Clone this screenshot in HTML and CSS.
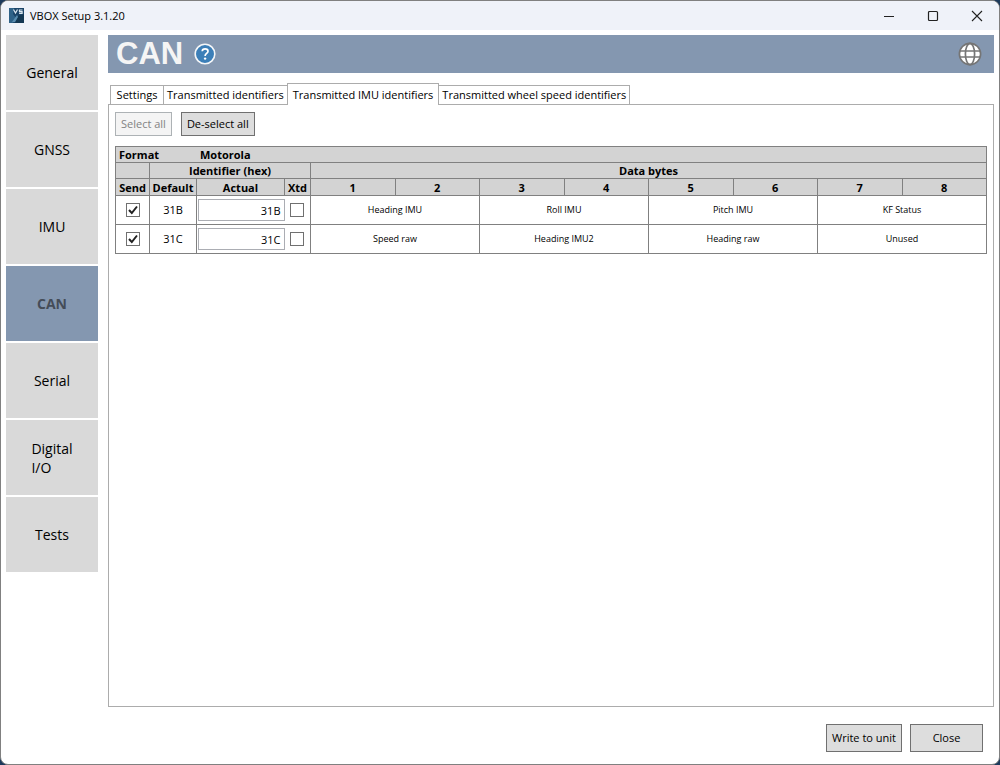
FILE: index.html
```html
<!DOCTYPE html>
<html lang="en">
<head>
  <meta charset="UTF-8">
  <title>VBOX Setup 3.1.20</title>
  <link rel="stylesheet" href="styles.css">
</head>
<body>
  <div class="window">

    <header class="titlebar">
      <svg class="app-icon" width="15" height="15" viewBox="0 0 15 15">
        <rect width="15" height="15" fill="#1b4468"/>
        <path d="M0 0h5L4 6l3 4-3 5H0z" fill="#2f6288"/>
        <path d="M9 8l6-2v9H6z" fill="#143853"/>
        <path d="M3 14l5-7 1 2-3 5z" fill="#5a8db0"/>
        <path d="M4.500 1.500l2 3.500 2-3.500M13.500 2h-3v1.600h2.600v1.800h-3" fill="none" stroke="#dbe7f0" stroke-width="1.200"/>
      </svg>
      <span class="window-title">VBOX Setup 3.1.20</span>
      <div class="window-controls">
        <button type="button" aria-label="Minimize">
          <svg width="12" height="12" viewBox="0 0 12 12"><path d="M1 6.500h10" stroke="#222" fill="none"/></svg>
        </button>
        <button type="button" aria-label="Maximize">
          <svg width="12" height="12" viewBox="0 0 12 12"><rect x="1.500" y="1.500" width="9" height="9" rx="1" stroke="#222" stroke-width="1.200" fill="none"/></svg>
        </button>
        <button type="button" aria-label="Close window">
          <svg width="12" height="12" viewBox="0 0 12 12"><path d="M1 1l10 10M11 1L1 11" stroke="#222" stroke-width="1.100" fill="none"/></svg>
        </button>
      </div>
    </header>

    <div class="content">
      <nav class="sidebar">
        <button type="button">General</button>
        <button type="button">GNSS</button>
        <button type="button">IMU</button>
        <button type="button" class="active">CAN</button>
        <button type="button">Serial</button>
        <button type="button"><span class="two-line">Digital<br>I/O</span></button>
        <button type="button">Tests</button>
      </nav>

      <main class="page">
        <div class="banner">
          <h1>CAN</h1>
          <button type="button" class="icon-button" aria-label="Help">
            <svg width="22" height="22" viewBox="0 0 22 22">
              <circle cx="11" cy="11" r="9.800" fill="#3c7fb8" stroke="#f4f6f8" stroke-width="1.600"/>
              <path d="M8.200 8.300C8.300 6.600 9.500 5.800 11.100 5.800c1.700 0 2.900.9 2.900 2.400 0 2.200-2.900 2.300-2.900 4.700" fill="none" stroke="#fff" stroke-width="1.700"/>
              <circle cx="11.100" cy="15.600" r="1.200" fill="#fff"/>
            </svg>
          </button>
          <button type="button" class="icon-button language" aria-label="Language">
            <svg width="24" height="24" viewBox="0 0 24 24">
              <circle cx="12" cy="12" r="10.500" fill="#fff"/>
              <g fill="none" stroke="#757575" stroke-width="1.700">
                <circle cx="12" cy="12" r="10.600"/>
                <ellipse cx="12" cy="12" rx="4.600" ry="10.600"/>
                <path d="M2 9h20M2 15h20"/>
              </g>
            </svg>
          </button>
        </div>

        <div class="tabs" role="tablist">
          <button type="button" role="tab">Settings</button>
          <button type="button" role="tab">Transmitted identifiers</button>
          <button type="button" role="tab" class="active" aria-selected="true">Transmitted IMU identifiers</button>
          <button type="button" role="tab">Transmitted wheel speed identifiers</button>
        </div>

        <section class="panel">
          <div class="toolbar">
            <button type="button" class="button" disabled>Select all</button>
            <button type="button" class="button">De-select all</button>
          </div>

          <table class="identifiers">
            <colgroup>
              <col class="col-send">
              <col class="col-default">
              <col class="col-actual">
              <col class="col-xtd">
              <col span="8">
            </colgroup>
            <thead>
              <tr>
                <th colspan="12" class="format"><span>Format</span>Motorola</th>
              </tr>
              <tr>
                <th></th>
                <th colspan="3">Identifier (hex)</th>
                <th colspan="8">Data bytes</th>
              </tr>
              <tr class="columns">
                <th>Send</th>
                <th>Default</th>
                <th>Actual</th>
                <th>Xtd</th>
                <th>1</th>
                <th>2</th>
                <th>3</th>
                <th>4</th>
                <th>5</th>
                <th>6</th>
                <th>7</th>
                <th>8</th>
              </tr>
            </thead>
            <tbody>
              <tr>
                <td><input type="checkbox" aria-label="Send 31B" checked></td>
                <td>31B</td>
                <td class="actual"><input type="text" aria-label="Actual identifier for 31B" value="31B"></td>
                <td class="xtd"><input type="checkbox" aria-label="Extended 31B"></td>
                <td colspan="2" class="signal">Heading IMU</td>
                <td colspan="2" class="signal">Roll IMU</td>
                <td colspan="2" class="signal">Pitch IMU</td>
                <td colspan="2" class="signal">KF Status</td>
              </tr>
              <tr>
                <td><input type="checkbox" aria-label="Send 31C" checked></td>
                <td>31C</td>
                <td class="actual"><input type="text" aria-label="Actual identifier for 31C" value="31C"></td>
                <td class="xtd"><input type="checkbox" aria-label="Extended 31C"></td>
                <td colspan="2" class="signal">Speed raw</td>
                <td colspan="2" class="signal">Heading IMU2</td>
                <td colspan="2" class="signal">Heading raw</td>
                <td colspan="2" class="signal">Unused</td>
              </tr>
            </tbody>
          </table>
        </section>
      </main>
    </div>

    <footer class="actions">
      <button type="button" class="button">Write to unit</button>
      <button type="button" class="button close">Close</button>
    </footer>

  </div>
</body>
</html>
```
FILE: styles.css
```css
:root {
  --accent: #8497b0;
  --button-bg: #dddddd;
  --line: #808080;
  --panel-line: #acacac;
}

* {
  box-sizing: border-box;
}

body {
  margin: 0;
  background-color: #1d3a5c;
  color: #000;
  font-family: "Open Sans", "Noto Sans", sans-serif;
  font-size: 11px;
  line-height: 16px;
}

button, input {
  font: inherit;
  color: inherit;
}

button {
  padding: 0;
  border: none;
  background: none;
  white-space: nowrap;
}

.window {
  display: flex;
  flex-direction: column;
  min-height: 100vh;
  border: 1px solid var(--line);
  border-radius: 8px;
  background-color: #fff;
  overflow: hidden;
}

.titlebar {
  display: flex;
  align-items: center;
  height: 29px;
  padding-left: 8px;
  background-color: #eff2f9;
}

.window-title {
  margin-left: 6px;
}

.window-controls {
  display: flex;
  align-self: stretch;
  margin-left: auto;
}

.window-controls button {
  display: flex;
  align-items: center;
  justify-content: center;
  width: 44px;
}

.content {
  display: flex;
  flex: 1;
  gap: 10px;
  padding: 5px 5px 0;
}

.sidebar {
  display: flex;
  flex-direction: column;
  gap: 2px;
  width: 92px;
}

.sidebar button {
  height: 75px;
  background-color: #d9d9d9;
  font-size: 14px;
  line-height: 19px;
}

.sidebar .active {
  background-color: var(--accent);
  color: #444c58;
  font-weight: bold;
}

.two-line {
  display: inline-block;
  text-align: left;
}

.page {
  display: flex;
  flex: 1;
  flex-direction: column;
}

.banner {
  display: flex;
  align-items: center;
  height: 38px;
  padding: 0 12px 0 8px;
  background-color: var(--accent);
}

.banner h1 {
  margin: 0 11px 0 0;
  color: #f5f5f5;
  font-family: "Liberation Sans", Arial, sans-serif;
  font-size: 31px;
  line-height: 38px;
}

.icon-button {
  display: flex;
}

.language {
  margin-left: auto;
}

.tabs {
  display: flex;
  align-items: flex-end;
  margin: 10px 0 -1px 2px;
}

.tabs button {
  min-width: 54px;
  height: 20px;
  margin-left: -1px;
  padding: 0 3px;
  border: 1px solid var(--panel-line);
  background-color: #fff;
}

.tabs button:first-child {
  margin-left: 0;
}

.tabs .active {
  z-index: 1;
  height: 22px;
  padding: 0 5px;
  border-bottom: none;
}

.panel {
  flex: 1;
  padding: 7px 6px;
  border: 1px solid var(--panel-line);
}

.toolbar {
  display: flex;
  gap: 9px;
  margin-bottom: 10px;
}

.button {
  height: 24px;
  padding: 0 5px;
  border: 1px solid #707070;
  background-color: var(--button-bg);
}

.button:disabled {
  border-color: #adb2b5;
  background-color: #f4f4f4;
  color: #838383;
}

.identifiers {
  width: 100%;
  border-collapse: collapse;
  table-layout: fixed;
}

.col-send {
  width: 34px;
}

.col-default {
  width: 47px;
}

.col-actual {
  width: 88px;
}

.col-xtd {
  width: 26px;
}

.identifiers th {
  height: 16px;
  padding: 0;
  border: 1px solid var(--line);
  background-color: #d3d3d3;
  line-height: 15px;
}

.identifiers .columns th {
  height: 17px;
}

.identifiers .format {
  padding-left: 3px;
  text-align: left;
}

.format span {
  display: inline-block;
  width: 81px;
}

.identifiers td {
  height: 29px;
  padding: 0;
  border: 1px solid var(--line);
  text-align: center;
}

.identifiers .signal {
  font-size: 9px;
}

.identifiers .actual {
  padding-left: 1px;
  border-right: none;
}

.identifiers .xtd {
  border-left: none;
}

.identifiers input {
  display: block;
}

input[type="text"] {
  width: 100%;
  height: 22px;
  padding: 0 3px;
  border: 1px solid #abadb3;
  background-color: #fff;
  text-align: right;
}

input[type="checkbox"] {
  appearance: none;
  width: 14px;
  height: 14px;
  margin: 0 auto;
  border: 1px solid #707070;
  background-color: #fff;
}

input[type="checkbox"]:checked {
  background-image: url("data:image/svg+xml,%3Csvg xmlns='http://www.w3.org/2000/svg' viewBox='0 0 12 12'%3E%3Cpath d='M2 6l2.800 3L10 2.500' fill='none' stroke='%23212121' stroke-width='2'/%3E%3C/svg%3E");
}

.actions {
  display: flex;
  justify-content: flex-end;
  gap: 8px;
  padding: 17px 16px 12px;
}

.actions .button {
  height: 28px;
}

.actions .close {
  width: 73px;
}
```
